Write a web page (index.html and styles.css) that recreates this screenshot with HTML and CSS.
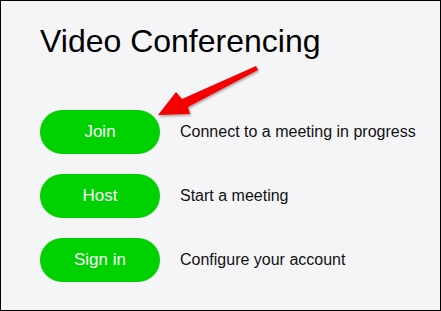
FILE: index.html
```html
<!DOCTYPE html>
<html>
<head>
<meta charset="utf-8">
<link rel="stylesheet" href="styles.css">
</head>
<body>
<div class="frame">
  <h1 class="title">Video Conferencing</h1>
  <div class="rows">
    <div class="row"><button class="btn">Join</button><span class="desc">Connect to a meeting in progress</span></div>
    <div class="row"><button class="btn">Host</button><span class="desc">Start a meeting</span></div>
    <div class="row"><button class="btn">Sign in</button><span class="desc">Configure your account</span></div>
  </div>
  <svg class="arrow" width="441" height="311" viewBox="0 0 441 311">
    <defs>
      <filter id="sh" x="-20%" y="-20%" width="140%" height="140%">
        <feDropShadow dx="1" dy="1.5" stdDeviation="1.2" flood-color="#000" flood-opacity="0.35"/>
      </filter>
    </defs>
    <polygon filter="url(#sh)" fill="#f40000" points="158,115 176,92 182,99 256,66 258,70 188,107 190,114"/>
  </svg>
</div>
</body>
</html>
```
FILE: styles.css
```css
html, body { margin: 0; padding: 0; }
body { width: 441px; height: 311px; overflow: hidden; font-family: "Liberation Sans", Arial, sans-serif; }
.frame {
  position: relative;
  box-sizing: border-box;
  width: 441px;
  height: 311px;
  border: 1px solid #000;
  background: #f5f5f7;
  padding: 20px 0 0 39px;
}
.title {
  margin: 0;
  font-weight: normal;
  font-size: 32px;
  line-height: 40px;
  color: #000;
}
.rows {
  margin-top: 49px;
  display: flex;
  flex-direction: column;
  gap: 20px;
}
.row {
  display: flex;
  align-items: center;
  gap: 20px;
}
.btn {
  width: 120px;
  height: 44px;
  border: none;
  border-radius: 22px;
  background: #00d100;
  color: #fff;
  font-family: "Liberation Sans", Arial, sans-serif;
  font-size: 17px;
  padding: 0;
}
.desc {
  font-size: 16px;
  color: #111;
}
.arrow { position: absolute; left: -1px; top: -1px; }
```
